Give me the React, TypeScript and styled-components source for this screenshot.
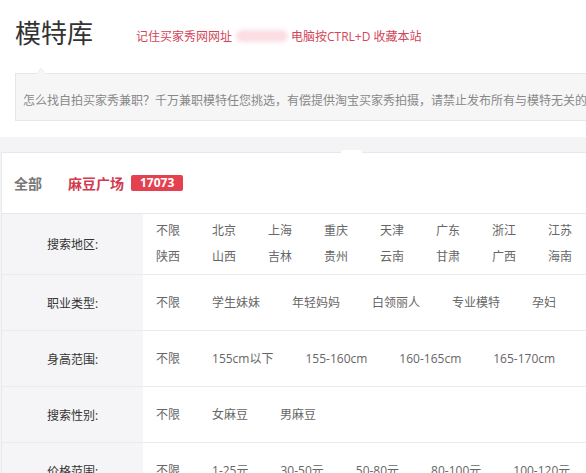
import React from 'react';
import styled, {createGlobalStyle} from "styled-components";

const GlobalStyle = createGlobalStyle`
  html, body {
    margin: 0;
    padding: 0;
    background: #fff;
    overflow: hidden;
  }
  body {
    font-family: "Open Sans", "Noto Sans CJK SC", sans-serif;
  }
`

type FilterRow = {
   label: string;
   options: string[];
};

const filters: FilterRow[] = [
   {
      label: "搜索地区:",
      options: ["不限", "北京", "上海", "重庆", "天津", "广东", "浙江", "江苏",
         "陕西", "山西", "吉林", "贵州", "云南", "甘肃", "广西", "海南"],
   },
   {label: "职业类型:", options: ["不限", "学生妹妹", "年轻妈妈", "白领丽人", "专业模特", "孕妇"]},
   {label: "身高范围:", options: ["不限", "155cm以下", "155-160cm", "160-165cm", "165-170cm"]},
   {label: "搜索性别:", options: ["不限", "女麻豆", "男麻豆"]},
   {label: "价格范围:", options: ["不限", "1-25元", "30-50元", "50-80元", "80-100元", "100-120元"]},
];

export default function App() {
   return (
      <Page>
         <GlobalStyle/>
         <Header>
            <Title>模特库</Title>
            <Remember>
               记住买家秀网网址<Blurred/>电脑按CTRL+D 收藏本站
            </Remember>
         </Header>
         <Notice>
            怎么找自拍买家秀兼职？千万兼职模特任您挑选，有偿提供淘宝买家秀拍摄，请禁止发布所有与模特无关的信息！
         </Notice>

         <Main>
            <Panel>
               <Marker/>
               <Tabs>
                  <Tab>全部</Tab>
                  <Tab active>麻豆广场</Tab>
                  <Badge>17073</Badge>
               </Tabs>
               {filters.map((row) => (
                  <Row key={row.label}>
                     <Label>{row.label}</Label>
                     <Options>
                        {row.options.map((o) => (
                           <Option key={o}>{o}</Option>
                        ))}
                     </Options>
                  </Row>
               ))}
            </Panel>
         </Main>
      </Page>
   );
}

const Page = styled.div`
    width: 620px;
`
const Header = styled.header`
    height: 68px;
    padding-left: 15px;
    display: flex;
    align-items: center;
`
const Title = styled.h1`
    margin: 0;
    font-size: 26px;
    font-weight: normal;
    color: #333;
    line-height: 34px;
    position: relative;
    top: -1px;
`
const Remember = styled.span`
    margin-left: 43px;
    font-size: 12px;
    color: #d2455a;
    display: flex;
    align-items: center;
    position: relative;
    top: 2px;
`
const Blurred = styled.span`
    display: inline-block;
    width: 52px;
    height: 12px;
    margin: 0 3px 0 4px;
    border-radius: 6px;
    background: #fbdde3;
    filter: blur(2px);
`
const Notice = styled.div`
    position: relative;
    margin: 5px 0 0 15px;
    height: 48px;
    box-sizing: border-box;
    padding: 16px 0 0 7px;
    background: #f6f6f7;
    border: 1px solid #e6e6e6;
    border-right: none;
    font-size: 12px;
    line-height: 22px;
    color: #888;
    white-space: nowrap;
    overflow: visible;

    &::before, &::after {
        content: "";
        position: absolute;
        left: 20px;
        width: 0;
        height: 0;
        border: 5px solid transparent;
    }
    &::before {
        top: -11px;
        border-bottom: 5px solid #e6e6e6;
        border-width: 5px;
        border-bottom-width: 6px;
    }
    &::after {
        top: -10px;
        border-bottom-color: #f6f6f7;
    }
`
const Main = styled.main`
    margin-top: 16px;
    padding: 15px 0 0 1px;
    background: #f4f4f6;
`
const Panel = styled.section`
    position: relative;
    background: #fff;
    border-top: 1px solid #e8e8e8;
    border-left: 1px solid #e8e8e8;
`
const Marker = styled.span`
    position: absolute;
    left: 339px;
    top: -3px;
    width: 21px;
    height: 9px;
    background: #fff;
    border-radius: 3px;
`
const Tabs = styled.div`
    height: 60px;
    padding-left: 12px;
    display: flex;
    align-items: center;
    border-bottom: 1px solid #e8e8e8;
`
const Tab = styled.span<{ active?: boolean }>`
    font-size: 14px;
    font-weight: bold;
    color: ${(p) => (p.active ? "#d23a4f" : "#777")};
    margin-right: ${(p) => (p.active ? "7px" : "26px")};
`
const Badge = styled.span`
    display: inline-block;
    height: 16px;
    line-height: 16px;
    padding: 0 9px;
    border-radius: 2px;
    background: #e5404f;
    color: #fff;
    font-size: 12px;
    font-weight: bold;
`
const Row = styled.div`
    display: grid;
    grid-template-columns: 141px 1fr;
    border-bottom: 1px solid #ebebeb;
`
const Label = styled.div`
    background: #f5f5f7;
    display: flex;
    align-items: center;
    justify-content: center;
    font-size: 12px;
    color: #333;
`
const Options = styled.div`
    min-height: 55px;
    box-sizing: border-box;
    padding: 4px 0 4px 13px;
    display: flex;
    flex-wrap: wrap;
    align-content: center;
`
const Option = styled.span`
    margin-right: 32px;
    line-height: 26px;
    font-size: 12px;
    color: #666;
    white-space: nowrap;
`
